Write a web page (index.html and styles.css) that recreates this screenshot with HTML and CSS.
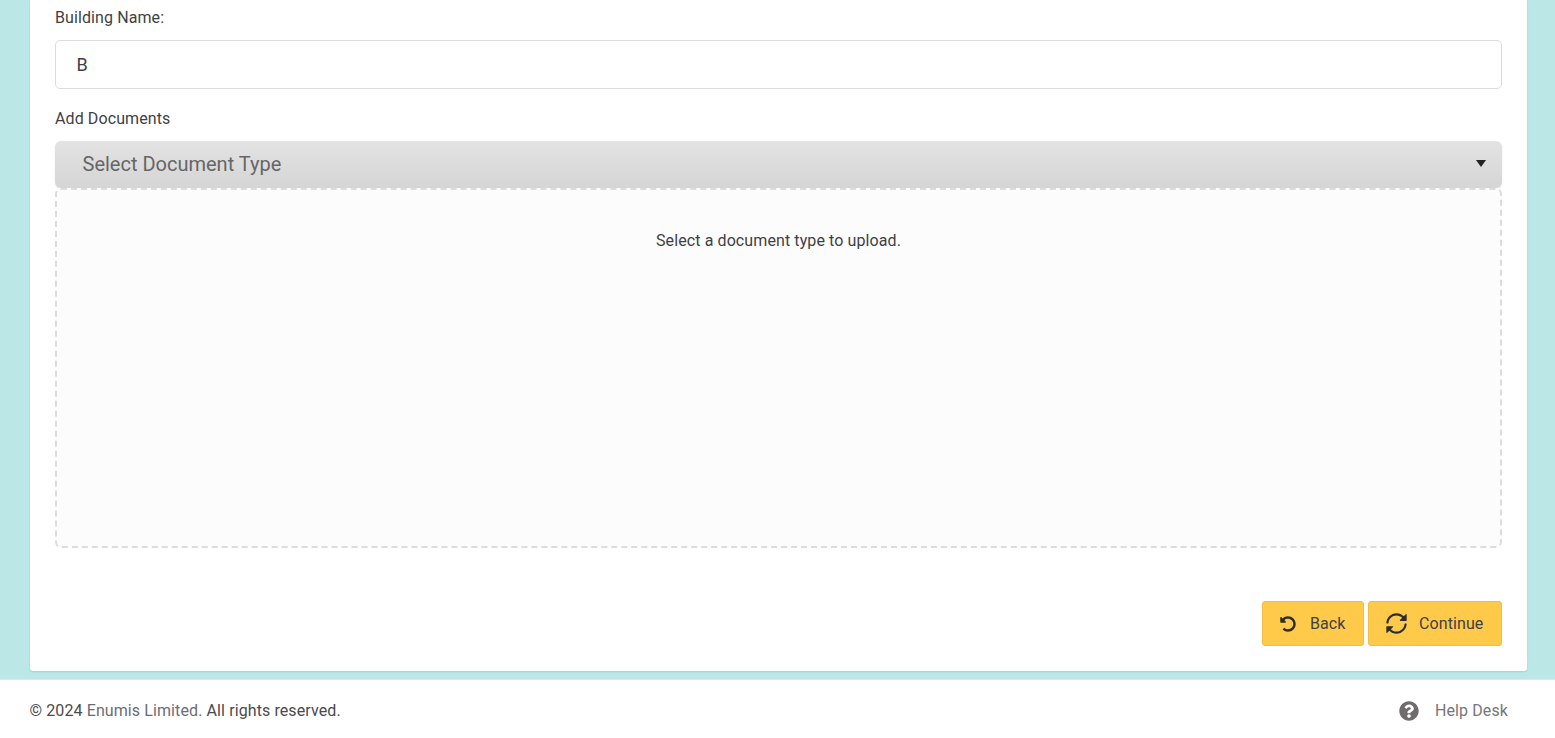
FILE: index.html
```html
<!DOCTYPE html>
<html lang="en">
<head>
<meta charset="utf-8">
<title>Add Documents</title>
<link rel="stylesheet" href="styles.css">
</head>
<body>
<main class="page">
  <section class="card">
    <label class="label label-first" for="building">Building Name:</label>
    <input class="text-input" id="building" type="text" value="B">
    <div class="label label-docs">Add Documents</div>
    <div class="select">
      <span>Select Document Type</span>
      <i class="caret"></i>
    </div>
    <div class="dropzone">Select a document type to upload.</div>
    <div class="actions">
      <button class="btn btn-back" type="button">
        <svg class="icon-back" viewBox="0 0 512 512"><path d="M255.545 8c-66.269.119-126.438 26.233-170.86 68.685L48.971 40.971C33.851 25.851 8 36.559 8 57.941V192c0 13.255 10.745 24 24 24h134.059c21.382 0 32.09-25.851 16.971-40.971l-41.75-41.75c30.864-28.899 70.801-44.907 113.23-45.273 92.398-.798 170.283 73.977 169.484 169.442C423.236 348.009 349.816 424 256 424c-41.127 0-79.997-14.678-110.63-41.556-4.743-4.161-11.906-3.908-16.368.553L89.34 422.659c-4.872 4.872-4.631 12.815.482 17.433C133.798 479.813 192.074 504 256 504c136.966 0 247.999-111.033 248-247.998C504.001 119.193 392.354 7.755 255.545 8z"/></svg>
        <span>Back</span>
      </button>
      <button class="btn btn-continue" type="button">
        <svg class="icon-sync" viewBox="0 0 512 512"><path d="M483.515 28.485L431.35 80.65C386.475 35.767 324.485 8 256 8 123.228 8 14.824 112.338 8.31 243.493 7.971 250.311 13.475 256 20.301 256h28.045c6.353 0 11.613-4.952 11.973-11.294C66.161 141.649 151.453 60 256 60c54.163 0 103.157 21.923 138.614 57.386l-54.128 54.129c-7.56 7.56-2.206 20.485 8.485 20.485H492c6.627 0 12-5.373 12-12V36.971c0-10.691-12.926-16.045-20.485-8.486zM491.699 256h-28.045c-6.353 0-11.613 4.952-11.973 11.294C445.839 370.351 360.547 452 256 452c-54.163 0-103.157-21.923-138.614-57.386l54.128-54.129c7.56-7.56 2.206-20.485-8.485-20.485H20c-6.627 0-12 5.373-12 12v143.029c0 10.691 12.926 16.045 20.485 8.485L80.65 431.35C125.525 476.233 187.516 504 256 504c132.773 0 241.176-104.338 247.69-235.493.339-6.818-5.165-12.507-11.991-12.507z"/></svg>
        <span>Continue</span>
      </button>
    </div>
  </section>
</main>
<footer class="footer">
  <p class="copy">© 2024 <a class="link" href="#">Enumis Limited.</a> All rights reserved.</p>
  <a class="help" href="#">
    <svg class="icon-help" viewBox="0 0 512 512"><path d="M504 256c0 136.997-111.043 248-248 248S8 392.997 8 256C8 119.083 119.043 8 256 8s248 111.083 248 248zM262.655 90c-54.497 0-89.255 22.957-116.549 63.758-3.536 5.286-2.353 12.415 2.715 16.258l34.699 26.31c5.205 3.947 12.621 3.008 16.665-2.122 17.864-22.658 30.113-35.797 57.303-35.797 20.429 0 45.698 13.148 45.698 32.958 0 14.976-12.363 22.667-32.534 33.976C247.128 238.528 216 254.941 216 296v4c0 6.627 5.373 12 12 12h56c6.627 0 12-5.373 12-12v-1.333c0-28.462 83.186-29.647 83.186-106.667 0-58.002-60.165-102-116.531-102zM256 338c-25.365 0-46 20.635-46 46 0 25.364 20.635 46 46 46s46-20.636 46-46c0-25.365-20.635-46-46-46z"/></svg>
    <span>Help Desk</span>
  </a>
</footer>
</body>
</html>
```
FILE: styles.css
```css
* { box-sizing: border-box; }
html, body { margin: 0; padding: 0; height: 738px; overflow: hidden; }
body {
  font-family: Roboto, "Liberation Sans", sans-serif;
  font-size: 16px;
  letter-spacing: .1px;
  color: #3f3f46;
  background: #fff;
  display: flex;
  flex-direction: column;
}
.page {
  height: 679px;
  background: #bbe8e6;
  padding: 0 28px 8px 30px;
  display: flex;
}
.card {
  flex: 1;
  background: #fff;
  border-radius: 0 0 3px 3px;
  box-shadow: 0 1px 2px rgba(0,0,0,.12);
  padding: 0 25px 25px;
  display: flex;
  flex-direction: column;
}
.label { line-height: 20px; display: block; }
.label-first { margin-top: 8px; height: 32px; }
.label-docs { margin-top: 20px; height: 32px; }
.text-input {
  display: block;
  width: 100%;
  height: 49px;
  border: 1px solid #dcdcdc;
  border-radius: 5px;
  padding: 0 20.5px;
  font: 18px Roboto, sans-serif;
  letter-spacing: 0;
  color: #3f3f46;
  background: #fff;
  outline: none;
}
.select {
  height: 47px;
  border-radius: 6px;
  background: linear-gradient(#e3e3e3, #d5d5d5);
  box-shadow: 0 1px 2px rgba(0,0,0,.1);
  display: flex;
  align-items: center;
  justify-content: space-between;
  padding: 0 16px 2px 27.5px;
  font-size: 20px;
  letter-spacing: 0;
  color: #666;
}
.caret {
  width: 0;
  height: 0;
  border-left: 5px solid transparent;
  border-right: 5px solid transparent;
  border-top: 7px solid #222;
}
.dropzone {
  height: 360px;
  border: 2px dashed #dcdcdc;
  border-radius: 6px;
  background: #fcfcfc;
  padding-top: 41px;
  text-align: center;
  line-height: 20px;
}
.actions {
  margin-top: 53px;
  display: flex;
  justify-content: flex-end;
  gap: 4px;
}
.btn {
  height: 45px;
  border: 1px solid #f3bd45;
  border-radius: 3px;
  background: #ffca4a;
  color: #3f3f46;
  font: 16px Roboto, sans-serif;
  letter-spacing: .1px;
  display: flex;
  align-items: center;
  padding: 0 17px;
}
.btn svg { fill: #2d2d2d; display: block; }
.btn-back { width: 102px; }
.btn-continue { width: 134px; }
.icon-back { width: 16px; height: 16px; margin-right: 14px; }
.icon-sync { width: 21px; height: 21px; margin-right: 12px; }
.footer {
  height: 59px;
  background: #fff;
  border-top: 1px solid #e4e4e4;
  display: flex;
  align-items: center;
  justify-content: space-between;
  padding: 3px 47px 0 29.5px;
}
.copy { margin: 0; color: #4a4a50; }
.link { color: #6c6c78; text-decoration: none; }
.help { display: flex; align-items: center; color: #77757a; text-decoration: none; }
.icon-help { width: 20px; height: 20px; fill: #6f6c6e; margin-right: 16px; margin-left: -1px; }
```
